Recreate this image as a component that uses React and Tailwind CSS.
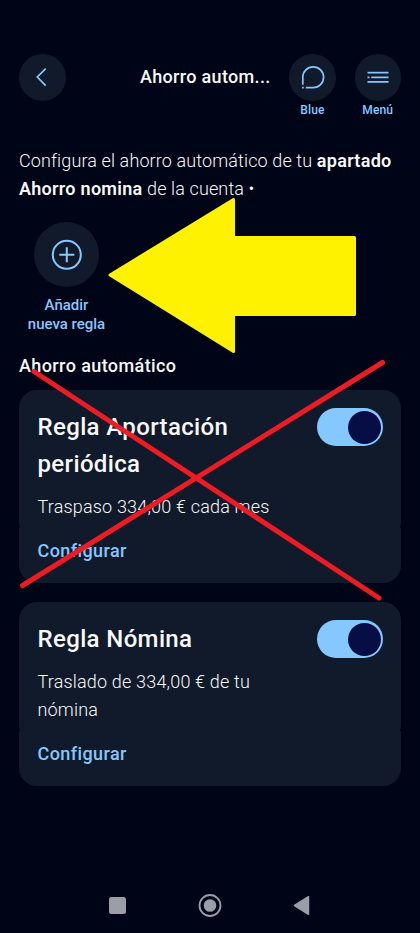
function BackIcon() {
  return (
    <svg width="24" height="24" viewBox="0 0 24 24" fill="none" stroke="#85c8ff" strokeWidth="1.7">
      <path d="M15.7 3.7L7.3 12l8.4 8.6" />
    </svg>
  );
}

function BlueIcon() {
  return (
    <svg width="24" height="24" viewBox="0 0 24 24" fill="none" stroke="#85c8ff" strokeWidth="1.7">
      <path d="M1.8 19.8V12.2A10.4 10.4 0 1 1 12.2 22.6H4.8" />
      <path d="M1 22.6h1.7" />
    </svg>
  );
}

function MenuIcon() {
  return (
    <svg width="24" height="24" viewBox="0 0 24 24" fill="none" stroke="#85c8ff" strokeWidth="1.8">
      <path d="M1.5 7.7h21M1.5 12.3h2M5.3 12.3h17.2M1.5 16.9h21" />
    </svg>
  );
}

function AddIcon() {
  return (
    <svg width="32" height="32" viewBox="0 0 32 32" fill="none" stroke="#85c8ff" strokeWidth="2">
      <circle cx="15.8" cy="15.8" r="14" />
      <path d="M15.8 8.3v15M8.3 15.8h15" />
    </svg>
  );
}

function Toggle() {
  return (
    <button className="flex h-[38px] w-[66px] shrink-0 items-center justify-end rounded-full bg-[#85c8ff] pr-[2px]" role="switch" aria-checked="true">
      <span className="h-[33px] w-[33px] rounded-full bg-[#070e46]" />
    </button>
  );
}

function RuleCard({ title, text }) {
  return (
    <section>
      <div className="rounded-[18px] bg-[#111a2b] pt-[18px] pr-[18px] pb-[19px] pl-[18.5px]">
        <div className="flex items-start justify-between">
          <h3 className="pt-[1px] text-[24px] leading-[37px] font-medium tracking-[0.36px]">
            {title.map((line) => (
              <span key={line} className="block whitespace-nowrap">{line}</span>
            ))}
          </h3>
          <Toggle />
        </div>
        <p className="mt-[9.5px] text-[18px] leading-[28px] font-light tracking-[0.18px]">
          {text.map((line) => (
            <span key={line} className="block whitespace-nowrap">{line}</span>
          ))}
        </p>
      </div>
      <div className="-mt-[12px] rounded-b-[18px] bg-[#111a2b] pt-[9px] pb-[18.5px] pl-[18.5px]">
        <a className="block text-[18px] leading-[28px] font-medium tracking-[0.4px] text-[#85c8ff]">Configurar</a>
      </div>
    </section>
  );
}

export default function App() {
  return (
    <div className="relative h-[933px] w-[420px] overflow-hidden bg-[#000417] font-['Roboto',sans-serif] text-[#f7f8f8]">
      <header className="flex h-[130px] items-start pt-[54px] pl-[19px]">
        <button className="flex h-[46.5px] w-[46.5px] items-center justify-center rounded-full bg-[#111a2b]">
          <BackIcon />
        </button>
        <h1 className="ml-[74.5px] w-[149px] text-[18px] leading-[46px] font-medium tracking-[0.32px] whitespace-nowrap">Ahorro autom...</h1>
        <div className="flex w-[47px] flex-col items-center">
          <button className="flex h-[46.5px] w-[46.5px] items-center justify-center rounded-full bg-[#111a2b]">
            <BlueIcon />
          </button>
          <span className="text-[12px] leading-[18px] font-medium tracking-[0.15px] text-[#85c8ff]">Blue</span>
        </div>
        <div className="ml-[18.5px] flex w-[46.5px] flex-col items-center">
          <button className="flex h-[46.5px] w-[46.5px] items-center justify-center rounded-full bg-[#111a2b]">
            <MenuIcon />
          </button>
          <span className="text-[12px] leading-[18px] font-medium tracking-[0.15px] text-[#85c8ff]">Menú</span>
        </div>
      </header>

      <main className="px-[19px] pt-[17px]">
        <p className="text-[18px] leading-[28px] font-light tracking-[0.12px] whitespace-nowrap">
          Configura el ahorro automático de tu <b className="font-semibold tracking-[0.3px]">apartado</b>
          <br />
          <b className="font-semibold tracking-[0.28px]">Ahorro nomina</b> de la cuenta •
        </p>

        <div className="mt-[19px] flex w-[95px] flex-col items-center">
          <button className="flex h-[65px] w-[65px] items-center justify-center rounded-full bg-[#111a2b]">
            <AddIcon />
          </button>
          <span className="mt-[9px] text-center text-[15px] leading-[18.5px] font-medium whitespace-nowrap text-[#85c8ff]">
            Añadir
            <br />
            nueva regla
          </span>
        </div>

        <h2 className="mt-[19px] text-[18px] leading-[28px] font-medium tracking-[0.4px]">Ahorro automático</h2>

        <div className="mt-[10px] flex flex-col gap-[19px]">
          <RuleCard title={['Regla Aportación', 'periódica']} text={['Traspaso 334,00 € cada mes']} />
          <RuleCard title={['Regla Nómina']} text={['Traslado de 334,00 € de tu', 'nómina']} />
        </div>
      </main>

      {/* hand-drawn marks over the screen */}
      <svg className="absolute top-0 left-0" width="420" height="933" viewBox="0 0 420 933" fill="none">
        <path d="M110 275L233.5 199.5V237.5H354.5V314.5H233.5V351.5Z" fill="#fff200" stroke="#fff200" strokeWidth="3" strokeLinejoin="round" />
        <path d="M34 371.5L379 598M382.5 362.5L22.5 585.5" stroke="#ed1c24" strokeWidth="5" strokeLinecap="round" />
      </svg>

      <nav className="absolute bottom-0 left-0 flex h-[56px] w-full items-center justify-center">
        <svg width="206" height="24" viewBox="0 0 206 24" fill="#9c9ea7">
          <rect x="2" y="4" width="17" height="17" rx="2.5" />
          <circle cx="103" cy="12.5" r="10.5" fill="none" stroke="#9c9ea7" strokeWidth="1.8" />
          <circle cx="103" cy="12.5" r="6.3" />
          <path d="M187.5 12.5L201.5 3.7V21.3Z" stroke="#9c9ea7" strokeWidth="1.5" strokeLinejoin="round" />
        </svg>
      </nav>
    </div>
  );
}
